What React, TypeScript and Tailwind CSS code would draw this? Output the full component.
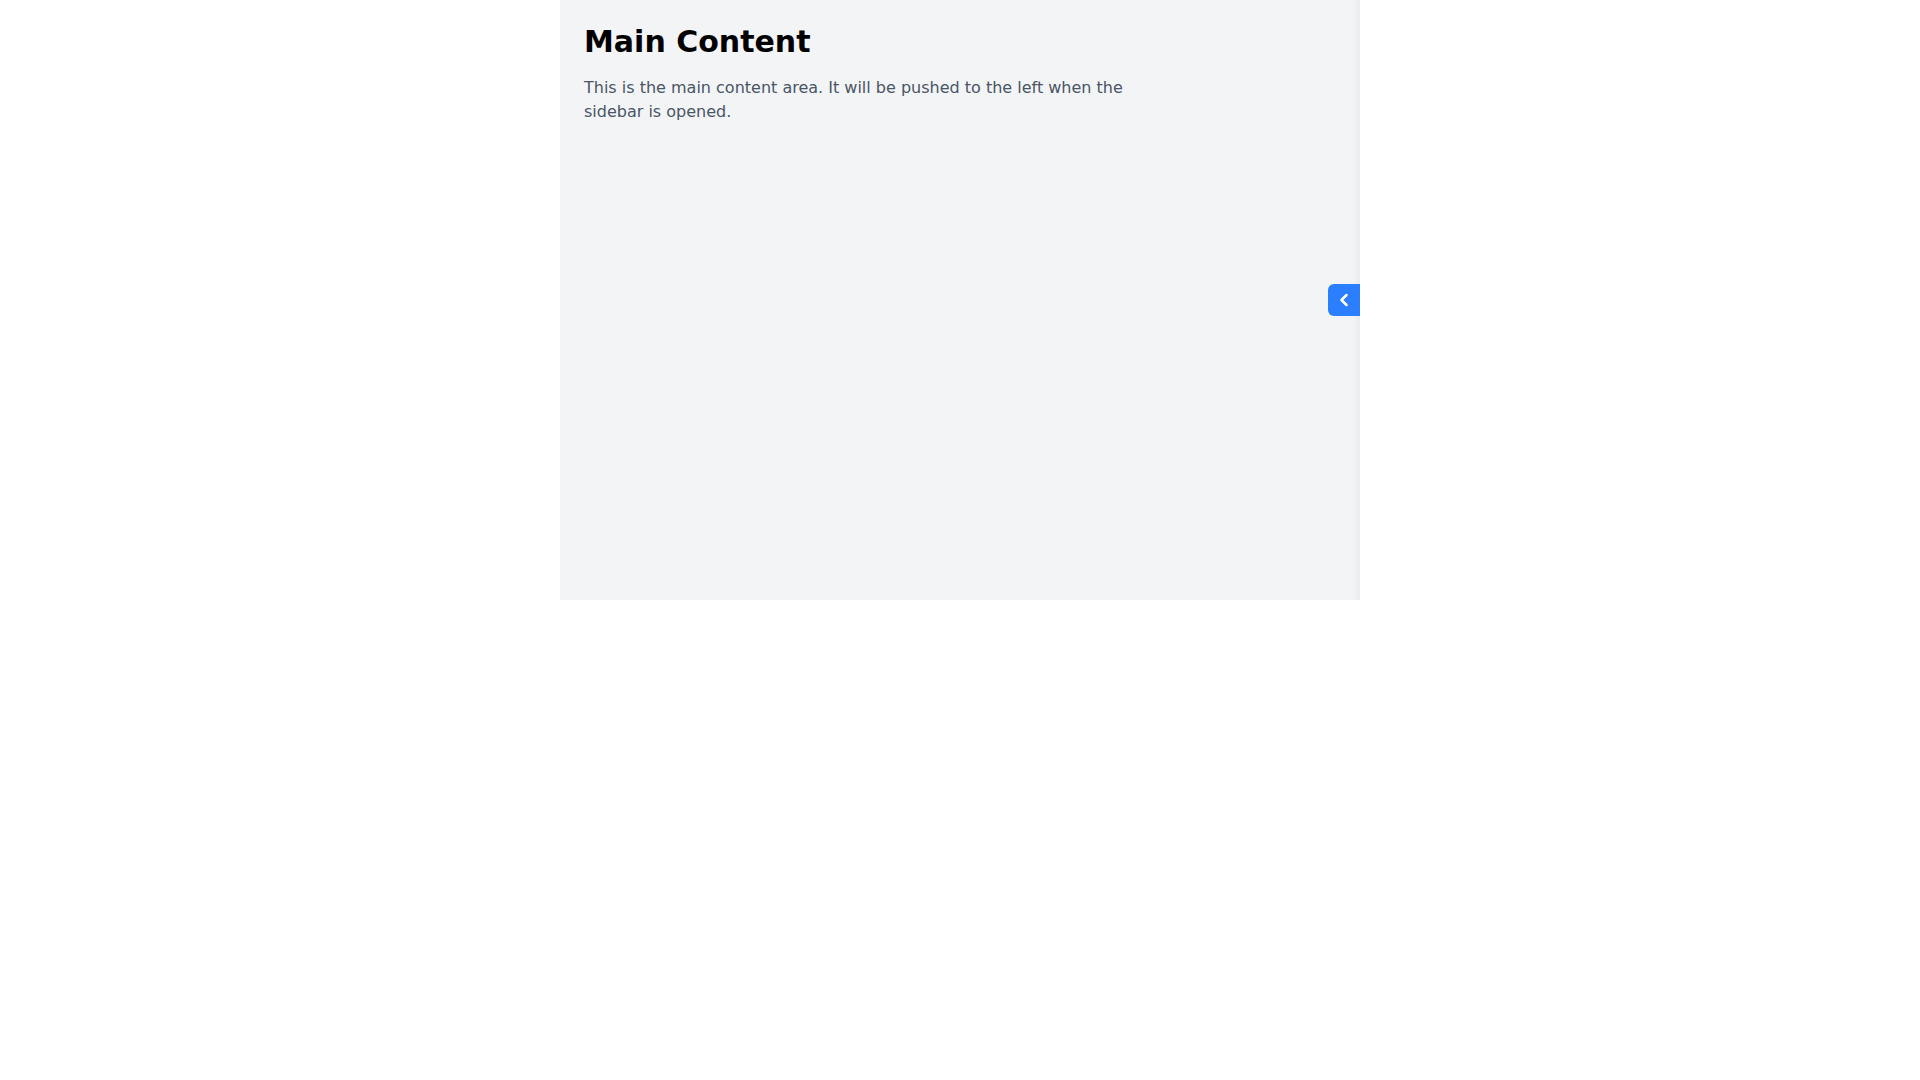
export default function App() {
  return (
    <div className="min-h-screen bg-white font-['DejaVu_Sans',sans-serif]">
      <div className="relative mx-auto h-[600px] w-[800px] overflow-hidden bg-gray-100">
        <main className="p-6">
          <h1 className="mb-4 text-3xl font-bold text-black">Main Content</h1>
          <p className="max-w-xl text-base text-gray-600">
            This is the main content area. It will be pushed to the left when the sidebar is opened.
          </p>
        </main>

        {/* closed sidebar: only its shadow peeks in */}
        <div className="absolute inset-y-0 right-0 w-2 bg-gradient-to-r from-transparent to-gray-200/70" />

        <button className="absolute right-0 top-1/2 flex h-8 w-8 -translate-y-1/2 items-center justify-center rounded-l-md bg-blue-500 text-white">
          <svg width="20" height="20" viewBox="0 0 24 24" fill="none" stroke="currentColor" strokeWidth="3" strokeLinecap="round" strokeLinejoin="round">
            <path d="m15 18-6-6 6-6" />
          </svg>
        </button>
      </div>
    </div>
  )
}
